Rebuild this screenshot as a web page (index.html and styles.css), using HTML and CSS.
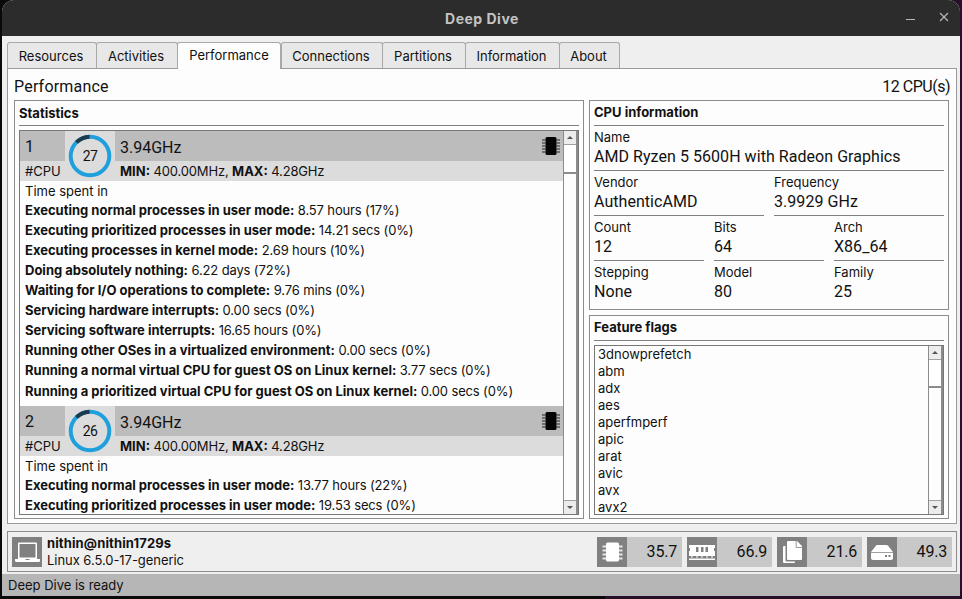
FILE: index.html
```html
<!DOCTYPE html>
<html lang="en">
<head>
    <meta charset="UTF-8">
    <meta name="viewport" content="width=device-width, initial-scale=1.0">
    <title>Deep Dive</title>
    <link rel="stylesheet" href="styles.css">
</head>
<body>
<div class="window">
    <header class="titlebar">
        <span class="title">Deep Dive</span>
        <span class="win-btn min"></span>
        <svg class="win-btn close" width="10" height="10" viewBox="0 0 10 10"><path d="M1 1l8 8M9 1l-8 8" stroke="#b8b8b8" stroke-width="1.2"/></svg>
    </header>

    <nav class="tabs">
        <span class="tab t1">Resources</span>
        <span class="tab t2">Activities</span>
        <span class="tab active t3">Performance</span>
        <span class="tab t4">Connections</span>
        <span class="tab t5">Partitions</span>
        <span class="tab t6">Information</span>
        <span class="tab t7">About</span>
    </nav>

    <main class="pane">
        <div class="pane-head">
            <span class="pane-title">Performance</span>
            <span class="pane-count">12 CPU(s)</span>
        </div>
        <div class="columns">
            <section class="frame stats">
                <h2>Statistics</h2>
                <div class="listbox">
                    <div class="list-body">
                        <article class="cpu">
                            <div class="cpu-head">
                                <div class="cpu-num">1</div>
                                <div class="cpu-tag">#CPU</div>
                                <div class="cpu-ring">
                                    <svg width="44" height="44" viewBox="0 0 44 44">
                                        <circle cx="22" cy="22" r="19.3" fill="none" stroke="#1fa0dc" stroke-width="4"/>
                                        <path d="M8.4 8.4A19.3 19.3 0 0 1 21.500 2.700" fill="none" stroke="#1c3a4e" stroke-width="4"/>
                                    </svg>
                                    <span>27</span>
                                </div>
                                <div class="cpu-freq"><span>3.94GHz</span>
                                    <svg class="chip" width="18" height="20" viewBox="0 0 18 20"><path d="M0 4h3.500M0 7h3.500M0 10h3.500M0 13h3.500M0 16h3.500M14.500 4h3.500M14.500 7h3.500M14.500 10h3.500M14.500 13h3.500M14.500 16h3.500" stroke="#222" stroke-width="1.2"/><rect x="3.500" y="1" width="11" height="18" rx="1.500" fill="#050505"/></svg>
                                </div>
                                <div class="cpu-range"><b>MIN:</b> 400.00MHz, <b>MAX:</b> 4.28GHz</div>
                            </div>
                            <p class="spent">Time spent in</p>
                            <p><b>Executing normal processes in user mode:</b> 8.57 hours (17%)</p>
                            <p><b>Executing prioritized processes in user mode:</b> 14.21 secs (0%)</p>
                            <p><b>Executing processes in kernel mode:</b> 2.69 hours (10%)</p>
                            <p><b>Doing absolutely nothing:</b> 6.22 days (72%)</p>
                            <p><b>Waiting for I/O operations to complete:</b> 9.76 mins (0%)</p>
                            <p><b>Servicing hardware interrupts:</b> 0.00 secs (0%)</p>
                            <p><b>Servicing software interrupts:</b> 16.65 hours (0%)</p>
                            <p><b>Running other OSes in a virtualized environment:</b> 0.00 secs (0%)</p>
                            <p><b>Running a normal virtual CPU for guest OS on Linux kernel:</b> 3.77 secs (0%)</p>
                            <p class="tail"><b>Running a prioritized virtual CPU for guest OS on Linux kernel:</b> 0.00 secs (0%)</p>
                        </article>
                        <article class="cpu">
                            <div class="cpu-head">
                                <div class="cpu-num">2</div>
                                <div class="cpu-tag">#CPU</div>
                                <div class="cpu-ring">
                                    <svg width="44" height="44" viewBox="0 0 44 44">
                                        <circle cx="22" cy="22" r="19.3" fill="none" stroke="#1fa0dc" stroke-width="4"/>
                                        <path d="M8.4 8.4A19.3 19.3 0 0 1 21.500 2.700" fill="none" stroke="#1c3a4e" stroke-width="4"/>
                                    </svg>
                                    <span>26</span>
                                </div>
                                <div class="cpu-freq"><span>3.94GHz</span>
                                    <svg class="chip" width="18" height="20" viewBox="0 0 18 20"><path d="M0 4h3.500M0 7h3.500M0 10h3.500M0 13h3.500M0 16h3.500M14.500 4h3.500M14.500 7h3.500M14.500 10h3.500M14.500 13h3.500M14.500 16h3.500" stroke="#222" stroke-width="1.2"/><rect x="3.500" y="1" width="11" height="18" rx="1.500" fill="#050505"/></svg>
                                </div>
                                <div class="cpu-range"><b>MIN:</b> 400.00MHz, <b>MAX:</b> 4.28GHz</div>
                            </div>
                            <p class="spent">Time spent in</p>
                            <p><b>Executing normal processes in user mode:</b> 13.77 hours (22%)</p>
                            <p><b>Executing prioritized processes in user mode:</b> 19.53 secs (0%)</p>
                        </article>
                    </div>
                    <div class="scrollbar">
                        <span class="sb-btn"><i class="arrow up"></i></span>
                        <span class="sb-thumb tall"></span>
                        <span class="sb-track"></span>
                        <span class="sb-btn"><i class="arrow down"></i></span>
                    </div>
                </div>
            </section>

            <div class="side">
                <section class="frame info">
                    <h2>CPU information</h2>
                    <div class="field-row one">
                        <div class="field"><label>Name</label><span>AMD Ryzen 5 5600H with Radeon Graphics</span></div>
                    </div>
                    <div class="field-row two">
                        <div class="field"><label>Vendor</label><span>AuthenticAMD</span></div>
                        <div class="field"><label>Frequency</label><span>3.9929 GHz</span></div>
                    </div>
                    <div class="field-row three">
                        <div class="field"><label>Count</label><span>12</span></div>
                        <div class="field"><label>Bits</label><span>64</span></div>
                        <div class="field"><label>Arch</label><span>X86_64</span></div>
                    </div>
                    <div class="field-row three last">
                        <div class="field"><label>Stepping</label><span>None</span></div>
                        <div class="field"><label>Model</label><span>80</span></div>
                        <div class="field"><label>Family</label><span>25</span></div>
                    </div>
                </section>
                <section class="frame flags">
                    <h2>Feature flags</h2>
                    <div class="listbox">
                        <ul class="list-body flag-list">
                            <li>3dnowprefetch</li>
                            <li>abm</li>
                            <li>adx</li>
                            <li>aes</li>
                            <li>aperfmperf</li>
                            <li>apic</li>
                            <li>arat</li>
                            <li>avic</li>
                            <li>avx</li>
                            <li>avx2</li>
                        </ul>
                        <div class="scrollbar">
                            <span class="sb-btn"><i class="arrow up"></i></span>
                            <span class="sb-thumb"></span>
                            <span class="sb-track"></span>
                            <span class="sb-btn"><i class="arrow down"></i></span>
                        </div>
                    </div>
                </section>
            </div>
        </div>
    </main>

    <footer class="sysbar">
        <div class="meter-icon host">
            <svg width="30" height="30" viewBox="0 0 30 30"><path fill-rule="evenodd" d="M6 6.500a1 1 0 0 1 1-1h17a1 1 0 0 1 1 1V22H6zM7.500 7v13.500h16V7z" fill="#fff"/><path d="M3 22h10l1 1h3l1-1h10v1.800a1.200 1.200 0 0 1-1.200 1.200H4.200A1.200 1.200 0 0 1 3 23.800z" fill="#fff"/></svg>
        </div>
        <div class="host-text">
            <b>nithin@nithin1729s</b>
            <span>Linux 6.5.0-17-generic</span>
        </div>
        <div class="meter">
            <div class="meter-icon">
                <svg width="30" height="30" viewBox="0 0 30 30"><path d="M5.500 9.500h3.500M5.500 13.500h3.500M5.500 17.500h3.500M5.500 21.500h3.500M22 9.500h3.500M22 13.500h3.500M22 17.500h3.500M22 21.500h3.500" stroke="#e4e4e4" stroke-width="2"/><rect x="9" y="5.500" width="13" height="19" rx="1.500" fill="#fff"/></svg>
            </div>
            <span>35.7</span>
        </div>
        <div class="meter">
            <div class="meter-icon">
                <svg width="30" height="30" viewBox="0 0 30 30"><path fill-rule="evenodd" d="M2 8h26v3h-1v3h1v5H2v-5h1v-3H2zM9 10v5h2.500v-5zM14 10v5h2.500v-5zM18.500 10v5H21v-5z" fill="#fff"/><path d="M2 21.500h26v1.500H2z" fill="#fff"/><path d="M5 19v2M10 19v2M15 19v2M20 19v2M25 19v2" stroke="#fff" stroke-width="1"/></svg>
            </div>
            <span>66.9</span>
        </div>
        <div class="meter">
            <div class="meter-icon">
                <svg width="30" height="30" viewBox="0 0 30 30"><path fill="#fff" d="M11 4h9l5 5v13a1 1 0 0 1-1 1H11a1 1 0 0 1-1-1V5a1 1 0 0 1 1-1z"/><path fill="#808080" d="M19.500 4v6H25v.8h-6.300V4z"/><path fill="#fff" d="M7 9h1.500v14.500a1 1 0 0 0 1 1H18v.5a1 1 0 0 1-1 1H7a1 1 0 0 1-1-1V10a1 1 0 0 1 1-1z"/></svg>
            </div>
            <span>21.6</span>
        </div>
        <div class="meter">
            <div class="meter-icon">
                <svg width="30" height="30" viewBox="0 0 30 30"><path fill="#fff" d="M10 8h9.500a2 2 0 0 1 1.600.8L26 15H4l4.900-6.200A2 2 0 0 1 10 8z"/><path fill-rule="evenodd" fill="#fff" d="M4 15.800h22V21a2 2 0 0 1-2 2H6a2 2 0 0 1-2-2zM18 18v2h2v-2zM21.500 18v2h2v-2z"/></svg>
            </div>
            <span>49.3</span>
        </div>
    </footer>

    <div class="statusbar">Deep Dive is ready</div>
</div>
</body>
</html>
```

FILE: styles.css
```css
* {
    box-sizing: border-box;
}
html, body {
    height: 100%;
}
body {
    margin: 0;
    background: linear-gradient(90deg, #0a0a0a 0, #0a0a0a 605px, #26102a 605px);
    font-family: Inter, "Liberation Sans", sans-serif;
    font-size: 13px;
    color: #111;
    overflow: hidden;
}
.window {
    width: 958px;
    height: 596px;
    margin-left: 2px;
    background: #efefef;
    border-radius: 12px 12px 0 0;
    overflow: hidden;
    display: flex;
    flex-direction: column;
}

/* title bar */
.titlebar {
    height: 36px;
    flex: none;
    background: #2c2c2c;
    display: flex;
    align-items: center;
    justify-content: center;
    position: relative;
    padding-left: 2px;
}
.title {
    color: #c4c4c4;
    font-weight: 700;
    font-size: 14px;
    letter-spacing: 0.5px;
}
.win-btn {
    position: absolute;
}
.min {
    left: 904px;
    top: 19px;
    width: 9px;
    height: 1px;
    background: #b8b8b8;
}
.close {
    left: 937px;
    top: 12px;
}

/* tabs */
.tabs {
    height: 32px;
    flex: none;
    padding: 6px 0 0 5px;
    display: flex;
    align-items: flex-end;
}
.tab {
    height: 26px;
    margin-right: -1px;
    background: #e8e8e8;
    border: 1px solid #a8a8a8;
    border-bottom: none;
    border-radius: 3px 3px 0 0;
    display: flex;
    align-items: center;
    justify-content: center;
    font-size: 13px;
    padding-top: 1px;
    padding-right: 2px;
}
.tab.active {
    height: 27px;
    background: #fdfdfd;
    position: relative;
    z-index: 1;
    margin-bottom: -1px;
    padding-top: 0;
    padding-right: 0;
    padding-bottom: 2px;
}
.t1 { width: 90px; }
.t2 { width: 82px; }
.t3 { width: 104px; margin-right: 0; }
.t4 { width: 102px; }
.t5 { width: 84px; }
.t6 { width: 95px; }
.t7 { width: 61px; }

.pane {
    height: 456px;
    flex: none;
    margin: 0 5px;
    width: 950px;
    background: #fdfdfd;
    border: 1px solid #9a9a9a;
    padding: 0 6px;
}
.pane-head {
    height: 31px;
    display: flex;
    justify-content: space-between;
    align-items: center;
    font-family: Roboto, sans-serif;
    font-size: 16px;
    padding: 4px 0 0 0;
}
.pane-title {
    letter-spacing: 0.2px;
}
.pane-count {
    letter-spacing: -0.5px;
}
.columns {
    display: flex;
    gap: 5px;
}
.frame {
    border: 1px solid #8c8c8c;
    padding: 0 4px;
}
.frame h2 {
    margin: 0;
    height: 25px;
    font-size: 13px;
    font-weight: 700;
    line-height: 24px;
    border-bottom: 1px solid #808080;
}
.side .frame h2 {
    line-height: 22px;
}
.stats {
    width: 570px;
    height: 419px;
}
.side {
    width: 360px;
    display: flex;
    flex-direction: column;
    gap: 5px;
}
.info {
    height: 210px;
}
.flags {
    height: 204px;
}

/* list with scrollbar */
.listbox {
    margin-top: 4px;
    border: 1px solid #777;
    display: flex;
    overflow: hidden;
}
.stats .listbox {
    height: 385px;
}
.flags .listbox {
    height: 170px;
}
.list-body {
    flex: 1;
    min-width: 0;
    overflow: hidden;
}
.scrollbar {
    width: 15px;
    flex: none;
    display: flex;
    flex-direction: column;
    border-left: 1px solid #8c8c8c;
    border-right: 2px solid #8c8c8c;
    background: #fdfdfd;
}
.sb-btn {
    height: 14px;
    flex: none;
    background: #ececec;
    border-bottom: 1px solid #a0a0a0;
    display: flex;
    align-items: center;
    justify-content: center;
}
.sb-btn:last-child {
    border-top: 1px solid #a0a0a0;
    border-bottom: none;
}
.sb-thumb {
    height: 28px;
    flex: none;
    background: #fff;
    border-bottom: 2px solid #8c8c8c;
}
.sb-thumb.tall {
    height: 29px;
}
.sb-track {
    flex: 1;
}
.arrow {
    width: 0;
    height: 0;
    border-left: 3px solid transparent;
    border-right: 3px solid transparent;
}
.arrow.up {
    border-bottom: 3px solid #555;
}
.arrow.down {
    border-top: 3px solid #555;
}

/* one cpu entry */
.cpu {
    height: 275px;
}
.cpu-head {
    display: grid;
    grid-template-columns: 45px 50px 1fr;
    grid-template-rows: 30px 20px;
    background: #dcdcdc;
}
.cpu-num {
    background: #bcbcbc;
    font-family: Roboto, sans-serif;
    font-size: 16px;
    line-height: 32px;
    padding-left: 5px;
}
.cpu-tag {
    grid-row: 2;
    grid-column: 1;
    line-height: 20px;
    padding-left: 5px;
}
.cpu-ring {
    grid-row: 1 / 3;
    grid-column: 2;
    position: relative;
    display: flex;
    align-items: center;
    justify-content: center;
    font-family: Roboto, sans-serif;
    font-size: 14px;
    letter-spacing: -0.5px;
}
.cpu-ring svg {
    position: absolute;
    left: 3px;
    top: 3px;
}
.cpu-freq {
    background: #bcbcbc;
    font-family: Roboto, sans-serif;
    font-size: 16px;
    padding-left: 5px;
    display: flex;
    justify-content: space-between;
    align-items: center;
    padding-right: 3px;
}
.cpu-freq span {
    padding-top: 3px;
}
.cpu-range {
    grid-row: 2;
    grid-column: 3;
    line-height: 20px;
    padding-left: 5px;
    letter-spacing: -0.16px;
}
.cpu-range b {
    letter-spacing: 0;
}
.cpu p {
    margin: 0;
    height: 20px;
    line-height: 20px;
    padding-left: 5px;
    white-space: nowrap;
    letter-spacing: -0.14px;
}
.cpu p b {
    letter-spacing: 0;
}
.cpu p.spent {
    height: 19px;
    letter-spacing: 0;
}
.cpu p.tail {
    padding-top: 1px;
}

/* cpu information fields */
.field-row {
    display: grid;
    gap: 10px;
    height: 45px;
}
.field-row.one {
    grid-template-columns: 1fr;
}
.field-row.two {
    grid-template-columns: 1fr 1fr;
}
.field-row.three {
    grid-template-columns: 1fr 1fr 1fr;
}
.field {
    height: 45px;
    border-bottom: 1px solid #808080;
    display: flex;
    flex-direction: column;
}
.last .field {
    border-bottom: none;
}
.field label {
    height: 21px;
    line-height: 22px;
}
.field span {
    font-family: Roboto, sans-serif;
    font-size: 16px;
    line-height: 20px;
    letter-spacing: 0.05px;
}

/* flag list */
.flag-list {
    list-style: none;
    margin: 0;
    padding: 0 3px;
}
.flag-list li {
    height: 17px;
    line-height: 17px;
}

/* bottom bar */
.sysbar {
    flex: none;
    height: 41px;
    width: 950px;
    margin: 7px 5px 2px;
    border: 1px solid #8c8c8c;
    display: flex;
    align-items: center;
    padding-left: 4px;
    padding-right: 4px;
    gap: 5px;
}
.meter-icon {
    width: 30px;
    height: 30px;
    flex: none;
    background: #808080;
}
.meter-icon svg {
    display: block;
}
.host-text {
    flex: 1;
    display: flex;
    flex-direction: column;
    line-height: 17px;
}
.host-text b {
    letter-spacing: 0.12px;
}
.host-text span {
    letter-spacing: -0.05px;
}
.meter {
    width: 85px;
    height: 30px;
    background: #c8c8c8;
    display: flex;
    align-items: center;
    justify-content: space-between;
    padding-right: 5px;
    font-family: Roboto, sans-serif;
    font-size: 16px;
    letter-spacing: -0.2px;
}
.statusbar {
    flex: 1;
    background: #b6b6b6;
    padding-left: 6px;
    line-height: 22px;
}
```
